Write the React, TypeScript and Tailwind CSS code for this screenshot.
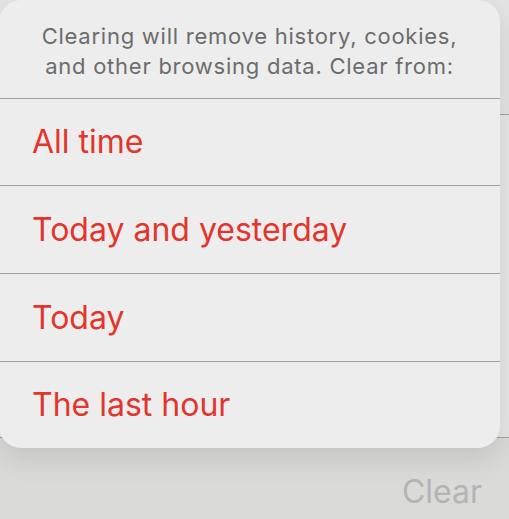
export default function App() {
  const options = [
    { label: "All time", h: "h-[87px]" },
    { label: "Today and yesterday", h: "h-[88px]" },
    { label: "Today", h: "h-[88px]" },
    { label: "The last hour", h: "h-[87px]" },
  ]

  return (
    <div className="relative h-[519px] w-[509px] overflow-hidden bg-[#dcdcdb] font-['Inter','Liberation_Sans',sans-serif]">
      {/* Underlying page */}
      <div className="flex h-full flex-col">
        <div className="h-[115px] border-b border-[#a3a3a3] bg-[#e3e3e3]" />
        <div className="h-[323px] border-b border-[#a3a3a3] bg-[#e6e6e6]" />
        <div className="flex flex-1 items-end justify-end bg-[#dadad9] pb-[7px] pr-[27px]">
          <span className="text-[32px] leading-[40px] text-[#b4b4b4]">Clear</span>
        </div>
      </div>

      {/* Action sheet */}
      <div className="absolute -left-px top-0 w-[501px] overflow-hidden rounded-[22px] bg-[#ededed] shadow-[0_12px_28px_rgba(0,0,0,0.10)]">
        <div className="flex h-[98px] flex-col items-center justify-start pt-[21px] text-center">
          <p className="text-[22px] leading-[30px] tracking-[0.75px] text-[#6c6c6c]">
            Clearing will remove history, cookies,
            <br />
            and other browsing data. Clear from:
          </p>
        </div>
        {options.map((opt) => (
          <div
            key={opt.label}
            className={`flex ${opt.h} items-center border-t border-[#a0a0a0] pl-[33px] text-[32px] text-[#e2352c]`}
          >
            {opt.label}
          </div>
        ))}
      </div>
    </div>
  )
}
